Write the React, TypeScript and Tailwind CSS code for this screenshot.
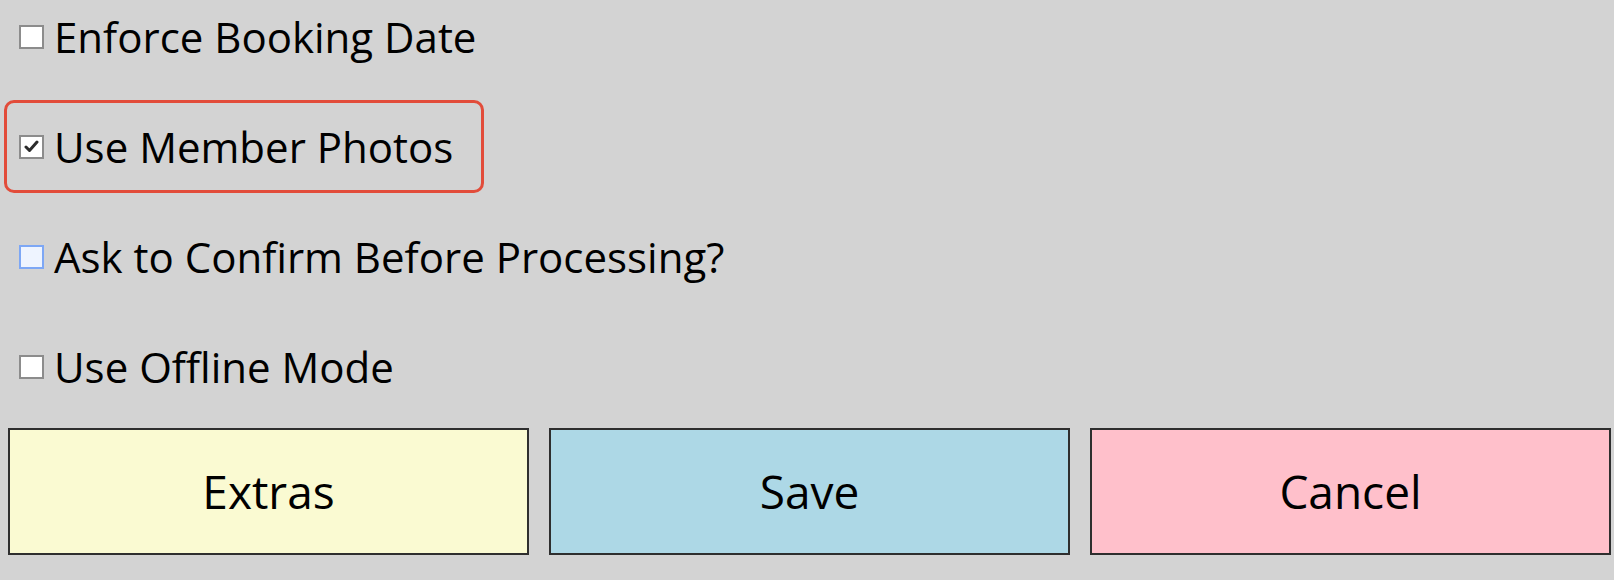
import { useState } from 'react';

type Option = {
  id: string;
  label: string;
  checked: boolean;
};

const initialOptions: Option[] = [
  { id: 'enforce', label: 'Enforce Booking Date', checked: false },
  { id: 'photos', label: 'Use Member Photos', checked: true },
  { id: 'confirm', label: 'Ask to Confirm Before Processing?', checked: false },
  { id: 'offline', label: 'Use Offline Mode', checked: false },
];

function Box({ checked, hover }: { checked: boolean; hover?: boolean }) {
  return (
    <span
      className={
        hover
          ? 'flex h-[24px] w-[25px] shrink-0 items-center justify-center border-2 border-[#7da7f5] bg-[#eef4ff]'
          : 'flex h-[24px] w-[25px] shrink-0 items-center justify-center border-2 border-[#8c8c8c] bg-white'
      }
    >
      {checked && (
        <svg width="15" height="13" viewBox="0 0 15 13" fill="none">
          <path d="M2 7 L5.5 10.5 L13 2" stroke="#2b2b2b" strokeWidth="3" strokeLinecap="round" strokeLinejoin="round" />
        </svg>
      )}
    </span>
  );
}

export default function App() {
  const [options, setOptions] = useState(initialOptions);
  const focused = 'photos';
  const hovered = 'confirm';

  const toggle = (id: string) =>
    setOptions((prev) => prev.map((o) => (o.id === id ? { ...o, checked: !o.checked } : o)));

  return (
    <div
      className="h-[580px] w-full overflow-hidden bg-[#d3d3d3] text-black"
      style={{ fontFamily: '"Open Sans", "Noto Sans", sans-serif' }}
    >
      <div className="-mt-[10px] flex flex-col items-start gap-[17px] pl-1">
        {options.map((o) => (
          <label
            key={o.id}
            onClick={() => toggle(o.id)}
            className={
              o.id === focused
                ? 'flex h-[93px] cursor-default items-center gap-[10px] rounded-[10px] border-[3px] border-[#e24c3a] pr-[28px] pl-[12px]'
                : 'flex h-[93px] cursor-default items-center gap-[10px] rounded-[10px] border-[3px] border-transparent pr-[28px] pl-[12px]'
            }
          >
            <Box checked={o.checked} hover={o.id === hovered} />
            <span className="text-[42px] leading-none">{o.label}</span>
          </label>
        ))}
      </div>

      <div className="mt-[15px] grid grid-cols-3 gap-5 pr-[3px] pl-2">
        <button className="h-[127px] border-2 border-[#2e2e2e] bg-[#fafad2] text-[46px]">Extras</button>
        <button className="h-[127px] border-2 border-[#2e2e2e] bg-[#add8e6] text-[46px]">Save</button>
        <button className="h-[127px] border-2 border-[#2e2e2e] bg-[#ffc0cb] text-[46px]">Cancel</button>
      </div>
    </div>
  );
}
